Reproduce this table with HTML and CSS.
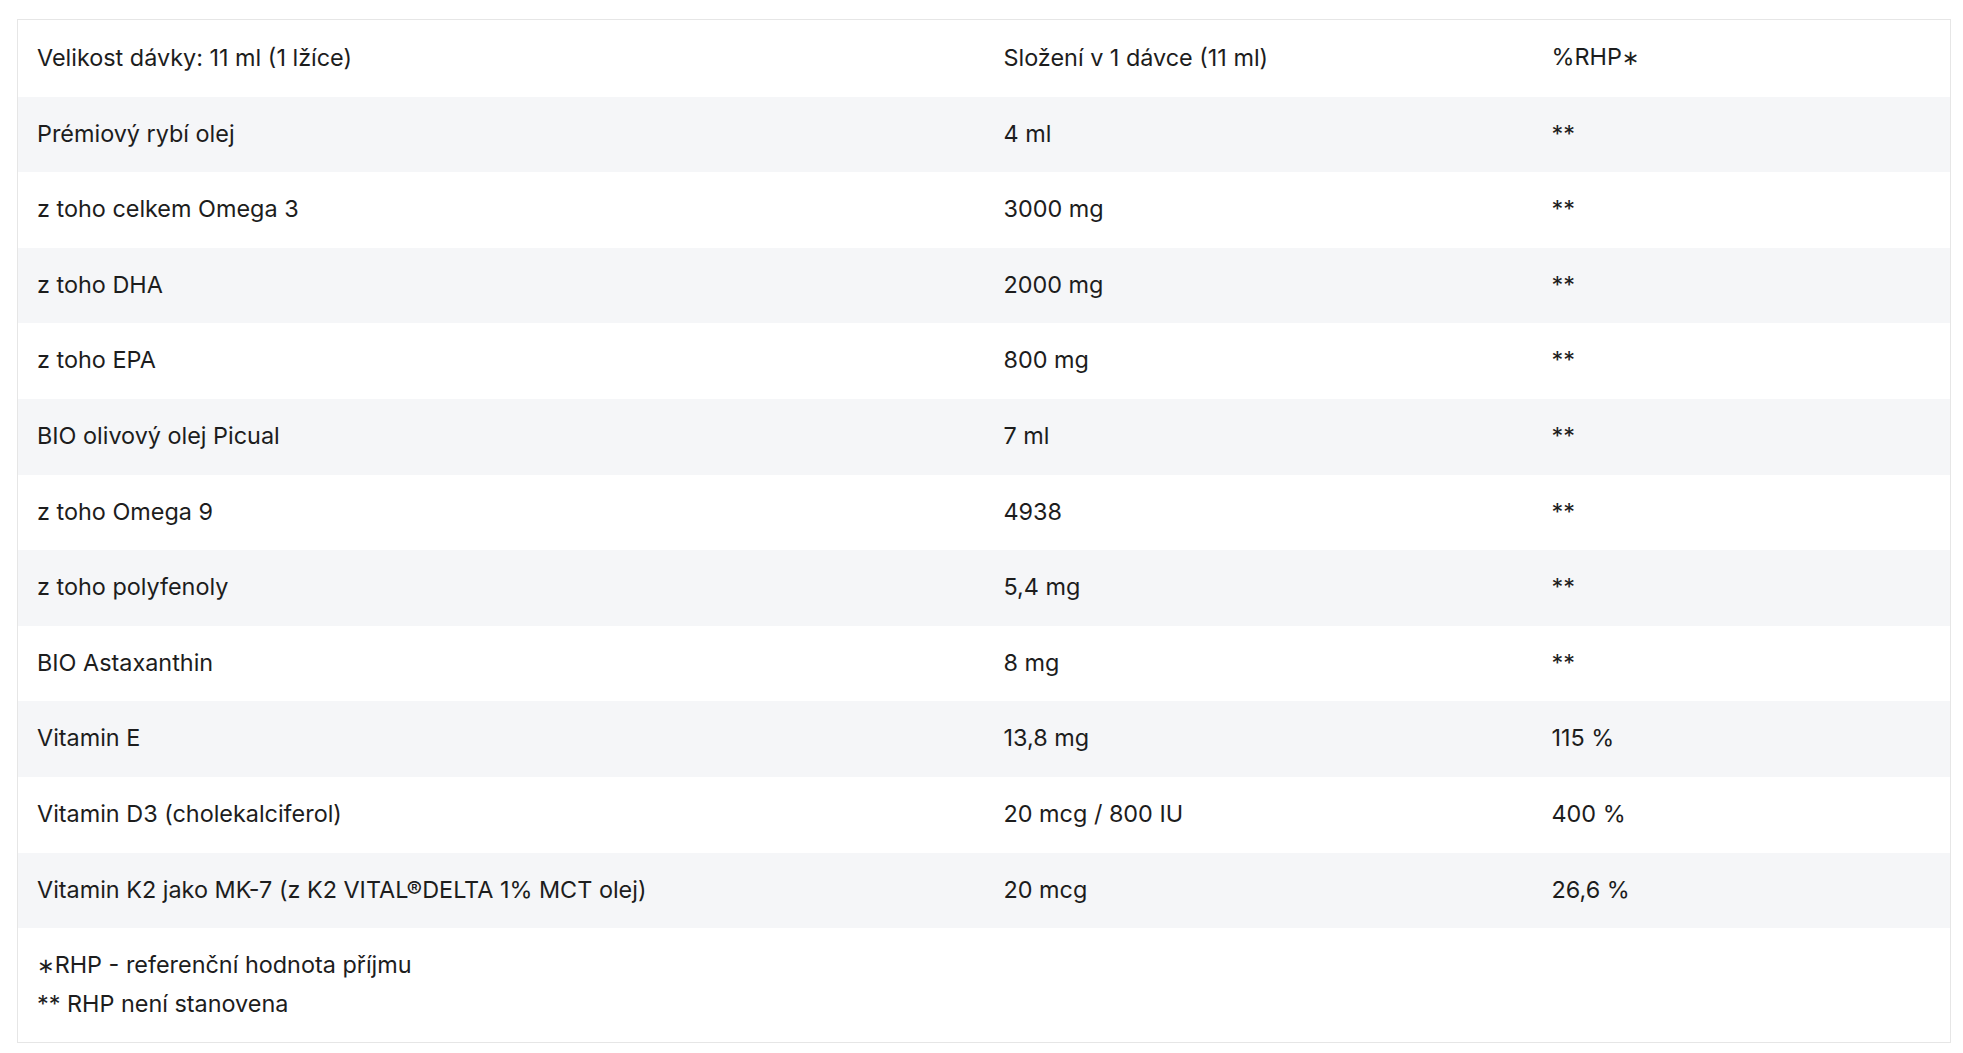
FILE: index.html
```html
<!DOCTYPE html>
<html lang="cs">
<head>
<meta charset="utf-8">
<title>Složení</title>
<link rel="stylesheet" href="styles.css">
</head>
<body>
<div class="wrap">
<table class="nutri">
<colgroup>
<col class="c1"><col class="c2"><col class="c3">
</colgroup>
<tbody>
<tr><td>Velikost dávky: 11 ml (1 lžíce)</td><td>Složení v 1 dávce (11 ml)</td><td>%RHP<span class="ast">∗</span></td></tr>
<tr><td>Prémiový rybí olej</td><td>4 ml</td><td>**</td></tr>
<tr><td>z toho celkem Omega 3</td><td>3000 mg</td><td>**</td></tr>
<tr><td>z toho DHA</td><td>2000 mg</td><td>**</td></tr>
<tr><td>z toho EPA</td><td>800 mg</td><td>**</td></tr>
<tr><td>BIO olivový olej Picual</td><td>7 ml</td><td>**</td></tr>
<tr><td>z toho Omega 9</td><td>4938</td><td>**</td></tr>
<tr><td>z toho polyfenoly</td><td>5,4 mg</td><td>**</td></tr>
<tr><td>BIO Astaxanthin</td><td>8 mg</td><td>**</td></tr>
<tr><td>Vitamin E</td><td>13,8 mg</td><td>115 %</td></tr>
<tr><td>Vitamin D3 (cholekalciferol)</td><td>20 mcg / 800 IU</td><td>400 %</td></tr>
<tr><td>Vitamin K2 jako MK-7 (z K2 VITAL®DELTA 1% MCT olej)</td><td>20 mcg</td><td>26,6 %</td></tr>
<tr class="foot"><td colspan="3"><div><span class="ast">∗</span>RHP - referenční hodnota příjmu</div><div>** RHP není stanovena</div></td></tr>
</tbody>
</table>
</div>
</body>
</html>
```
FILE: styles.css
```css
html, body {
  margin: 0;
  padding: 0;
  background: #ffffff;
}
.wrap {
  padding: 19px 12px 0 17px;
}
.nutri {
  width: 100%;
  border-collapse: collapse;
  table-layout: fixed;
  border: 1px solid #e6e6e6;
  font-family: Inter, "Noto Sans", sans-serif;
  font-size: 23.4px;
  color: #1d1d1d;
}
.c1 { width: 966px; }
.c2 { width: 548px; }
.c3 { width: auto; }
.nutri td {
  padding: 20px 20px 22px;
  line-height: 33.6px;
  height: 33.6px;
  vertical-align: middle;
  white-space: nowrap;
}
.nutri td:first-child {
  padding-left: 19px;
}
.nutri tr:nth-child(even) td {
  background: #f5f6f8;
}
.nutri tr.foot td {
  padding: 18px 20px 20px 19px;
  line-height: 37.6px;
  background: #ffffff;
}
.ast {
  font-family: "DejaVu Sans", sans-serif;
  font-size: 0.9em;
}
```
